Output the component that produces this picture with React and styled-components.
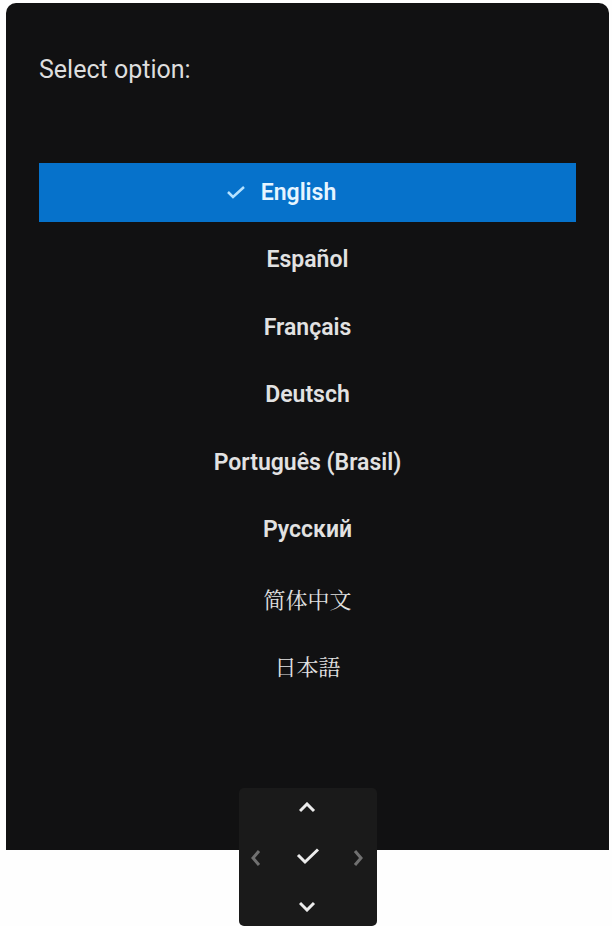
import React, { useState } from "react";
import styled, { createGlobalStyle } from "styled-components";

const GlobalStyle = createGlobalStyle`
  * { box-sizing: border-box; }
  body {
    margin: 0;
    background: #fefefe;
    font-family: Roboto, "Noto Sans CJK SC", sans-serif;
  }
  button { font-family: inherit; }
`;

const Page = styled.main`
  display: flex;
  flex-direction: column;
  align-items: center;
  padding: 3px 3px 0 6px;
`;

const Panel = styled.section`
  width: 100%;
  padding: 50px 33px 155px;
  background: #111112;
  border-radius: 10px 10px 0 0;
`;

const Title = styled.h1`
  margin: 0 0 76px;
  color: #dedede;
  font-size: 25px;
  font-weight: 400;
  line-height: 34px;
`;

const OptionList = styled.ul`
  display: flex;
  flex-direction: column;
  justify-content: space-between;
  min-height: 532px;
  margin: 0;
  padding: 0;
  list-style: none;
`;

const Option = styled.button`
  display: flex;
  align-items: center;
  justify-content: center;
  gap: 16px;
  width: 100%;
  height: 59px;
  padding: ${(p) => (p.$cjk ? "2px 0 0" : "0")};
  border: 0;
  cursor: pointer;
  background: ${(p) => (p.$selected ? "#0672cb" : "transparent")};
  color: ${(p) => (p.$selected ? "#e6f5ff" : "#e2e2e2")};
  font-size: ${(p) => (p.$cjk ? "22px" : "23px")};
  font-weight: ${(p) => (p.$cjk ? 400 : 600)};
  line-height: 28px;

  &:lang(zh) { font-family: "Noto Serif CJK SC", "Noto Sans CJK SC", serif; }
  &:lang(ja) { font-family: "Noto Serif CJK JP", "Noto Sans CJK JP", serif; }
`;

const Marker = styled.svg`
  width: 18px;
  height: 14px;
  margin-left: -52px;
  fill: none;
  stroke: #b5e2ff;
  stroke-width: 2.5;
`;

const Pad = styled.nav`
  position: relative;
  display: grid;
  grid-template-columns: 36px 1fr 36px;
  grid-template-rows: 40px 1fr 40px;
  grid-template-areas: ". up ." "left ok right" ". down .";
  width: 138px;
  height: 138px;
  margin-top: -62px;
  border-radius: 5px;
  background: #1a1a1a;
`;

const PadButton = styled.button`
  grid-area: ${(p) => p.$area};
  display: flex;
  align-items: center;
  justify-content: center;
  padding: 0;
  border: 0;
  background: transparent;
  cursor: pointer;

  svg {
    display: block;
    fill: none;
    stroke: ${(p) => (p.$dim ? "#707070" : "#ececec")};
    stroke-width: 3;
  }
`;

const LANGUAGES = [
  { code: "en", name: "English" },
  { code: "es", name: "Español" },
  { code: "fr", name: "Français" },
  { code: "de", name: "Deutsch" },
  { code: "pt-BR", name: "Português (Brasil)" },
  { code: "ru", name: "Русский" },
  { code: "zh-Hans", name: "简体中文", cjk: true },
  { code: "ja", name: "日本語", cjk: true },
];

export default function App() {
  const [current, setCurrent] = useState(0);
  const move = (step) =>
    setCurrent((i) => Math.min(LANGUAGES.length - 1, Math.max(0, i + step)));

  return (
    <Page>
      <GlobalStyle />
      <Panel>
        <Title>Select option:</Title>
        <OptionList>
          {LANGUAGES.map((l, i) => (
            <li key={l.code}>
              <Option
                type="button"
                lang={l.code}
                $cjk={l.cjk}
                $selected={i === current}
                aria-pressed={i === current}
                onClick={() => setCurrent(i)}
              >
                {i === current && (
                  <Marker viewBox="0 0 18 14" aria-hidden="true">
                    <path d="M1 6L6 11L17 1" />
                  </Marker>
                )}
                <span>{l.name}</span>
              </Option>
            </li>
          ))}
        </OptionList>
      </Panel>
      <Pad aria-label="Navigation">
        <PadButton type="button" $area="up" aria-label="Up" onClick={() => move(-1)}>
          <svg width="18" height="12" viewBox="0 0 18 12"><path d="M1 9L8 2L15 9" /></svg>
        </PadButton>
        <PadButton type="button" $area="left" $dim aria-label="Left">
          <svg width="12" height="18" viewBox="0 0 12 18"><path d="M8 3L2 10L8 17" /></svg>
        </PadButton>
        <PadButton type="button" $area="ok" aria-label="Confirm">
          <svg width="24" height="18" viewBox="0 0 24 18"><path d="M2 7L9 14L22 1.5" /></svg>
        </PadButton>
        <PadButton type="button" $area="right" $dim aria-label="Right">
          <svg width="12" height="18" viewBox="0 0 12 18"><path d="M2 3L8 10L2 17" /></svg>
        </PadButton>
        <PadButton type="button" $area="down" aria-label="Down" onClick={() => move(1)}>
          <svg width="18" height="12" viewBox="0 0 18 12"><path d="M1 3L8 10L15 3" /></svg>
        </PadButton>
      </Pad>
    </Page>
  );
}
